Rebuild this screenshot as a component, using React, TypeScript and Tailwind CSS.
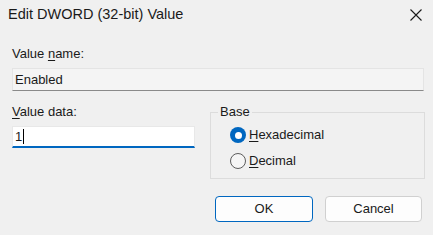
import React from "react";

const font = { fontFamily: '"Segoe UI", "Liberation Sans", Arial, sans-serif' };

function Radio({ checked, label, u }: { checked: boolean; label: string; u: string }) {
  return (
    <div className="flex items-center h-[20px]">
      {checked ? (
        <div className="w-[16px] h-[16px] rounded-full bg-[#0067c0] flex items-center justify-center">
          <div className="w-[7px] h-[7px] rounded-full bg-white" />
        </div>
      ) : (
        <div className="w-[16px] h-[16px] rounded-full border border-[#5c5c5c] bg-[#f5f5f5]" />
      )}
      <span className="ml-[3px] text-[13px] text-[#1a1a1a]">
        <span className="underline underline-offset-2">{u}</span>
        {label}
      </span>
    </div>
  );
}

export default function App() {
  return (
    <div
      className="w-[433px] h-[235px] bg-[#f0f0f0] flex flex-col text-[#1a1a1a] overflow-hidden"
      style={font}
    >
      <div className="h-[30px] flex items-center justify-between pl-[8px] pr-[11px]">
        <span className="text-[14.5px] text-[#1a1a1a]">Edit DWORD (32-bit) Value</span>
        <svg width="12" height="12" viewBox="0 0 12 12">
          <path d="M0.5 0.5 L11.5 11.5 M11.5 0.5 L0.5 11.5" stroke="#1a1a1a" strokeWidth="1.1" />
        </svg>
      </div>
      <div className="flex flex-col px-[12px]">
        <div className="mt-[16px] h-[16px] leading-[16px] text-[13px]">
          Value <span className="underline underline-offset-2">n</span>ame:
        </div>
        <div className="mt-[6px] h-[23px] mr-[-3px] bg-[#f4f4f4] border-t border-l border-r border-[#e4e4e4] border-b border-b-[#8a8a8a] flex items-center pl-[2px] text-[13px]">
          Enabled
        </div>
        <div className="flex mt-[13px]">
          <div className="w-[183px] shrink-0 flex flex-col">
            <div className="h-[16px] leading-[16px] text-[13px]">
              <span className="underline underline-offset-2">V</span>alue data:
            </div>
            <div className="mt-[6px] h-[22px] bg-white border-t border-l border-r border-[#e8e8e8] border-b-2 border-b-[#0067c0] flex items-center pl-[2px] text-[13px]">
              1<span className="inline-block w-[1px] h-[15px] bg-black ml-[1px]" />
            </div>
          </div>
          <fieldset className="ml-[15px] w-[215px] shrink-0 h-[75px] border border-[#dcdcdc] pl-[19px] pt-[5px]">
            <legend className="px-[2px] ml-[-12px] text-[13px] leading-[16px]">Base</legend>
            <div className="flex flex-col gap-[6px]">
              <Radio checked label="exadecimal" u="H" />
              <Radio checked={false} label="ecimal" u="D" />
            </div>
          </fieldset>
        </div>
        <div className="flex justify-end gap-[12px] mt-[17px] mr-[-1px]">
          <button className="w-[98px] h-[26px] rounded-[4px] bg-[#fdfdfd] border border-[#0067c0] text-[13px]">
            OK
          </button>
          <button className="w-[97px] h-[26px] rounded-[4px] bg-[#fdfdfd] border border-[#d0d0d0] text-[13px]">
            Cancel
          </button>
        </div>
      </div>
    </div>
  );
}
